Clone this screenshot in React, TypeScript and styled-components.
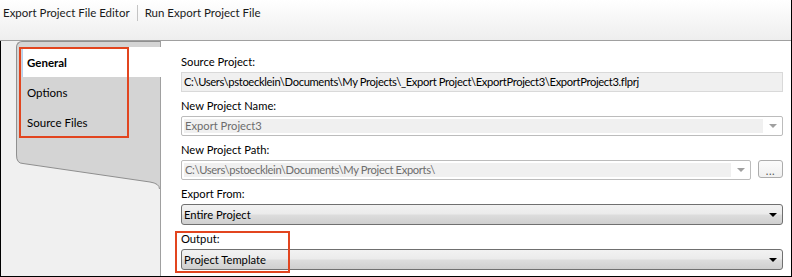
import React from "react";
import styled, { createGlobalStyle } from "styled-components";

const Global = createGlobalStyle`
  html, body { margin: 0; padding: 0; background: #ffffff; }
  body {
    font-family: Lato, "Open Sans", "Noto Sans", sans-serif;
    font-size: 11px;
    color: #000;
  }
  * { box-sizing: border-box; }
`;

const Frame = styled.div`
  width: 792px;
  height: 277px;
  border-right: 1px solid #000;
  border-bottom: 1px solid #000;
  display: flex;
  flex-direction: column;
  overflow: hidden;
`;

const Toolbar = styled.div`
  height: 41px;
  flex: none;
  border-bottom: 1px solid #a0a0a0;
  background: linear-gradient(#ffffff, #f8f8f8 40%, #eeeeee);
  display: flex;
  align-items: flex-start;
  padding: 4px 0 0 3px;
`;

const ToolItem = styled.span`
  font-size: 11.5px;
  line-height: 17px;
  color: #1a1a1a;
  padding-right: 7px;
`;

const ToolSep = styled.span`
  width: 1px;
  height: 16px;
  background: #c4c4c4;
  margin: 1px 7px 0 0;
`;

const Body = styled.div`
  flex: 1;
  display: flex;
  border-left: 1px solid #000;
  min-height: 0;
`;

const Sidebar = styled.div`
  width: 159px;
  flex: none;
  background: #f0f0f0;
  padding-left: 15px;
  display: flex;
  flex-direction: column;
  position: relative;
  z-index: 1;
`;

const TabStrip = styled.div`
  position: relative;
  height: 112px;
  background: #d4d4d4;
  border-left: 1px solid #8f8f8f;
  border-top: 1px solid #8f8f8f;
  border-top-left-radius: 6px;
  padding-top: 5px;
  padding-left: 5px;
`;

const Tab = styled.div<{ $active?: boolean }>`
  height: 30px;
  margin-right: -1px;
  display: flex;
  align-items: center;
  padding-left: 4px;
  font-size: 11.5px;
  font-weight: ${(p) => (p.$active ? 700 : 400)};
  background: ${(p) => (p.$active ? "#ffffff" : "transparent")};
  border-left: 1px solid ${(p) => (p.$active ? "#b3d0f0" : "transparent")};
`;

const TailSvg = styled.svg`
  display: block;
  width: 144px;
  height: 36px;
  flex: none;
`;

const Highlight = styled.div`
  position: absolute;
  border: 2px solid #e2451f;
  pointer-events: none;
`;

const TabHighlight = styled(Highlight)`
  left: 2px;
  top: 5px;
  width: 110px;
  height: 91px;
`;

const OutputHighlight = styled(Highlight)`
  left: -6px;
  top: 0;
  width: 115px;
  height: 42px;
`;

const Content = styled.div`
  flex: 1;
  background: #ffffff;
  border-left: 1px solid #a0a0a0;
  padding: 13px 8px 0 20px;
  display: flex;
  flex-direction: column;
  gap: 6px;
`;

const Group = styled.div`
  position: relative;
  display: flex;
  flex-direction: column;
`;

const Label = styled.div`
  height: 16px;
  line-height: 16px;
  margin-bottom: 2px;
  font-size: 11.2px;
`;

const ReadField = styled.div`
  height: 20px;
  border: 1px solid #d9d9d9;
  background: #f0f0f0;
  padding-left: 2px;
  line-height: 18px;
  font-size: 11.2px;
  letter-spacing: -0.35px;
  white-space: nowrap;
  overflow: hidden;
`;

const Row = styled.div`
  display: flex;
  align-items: flex-start;
  gap: 7px;
`;

const DisabledCombo = styled.div`
  flex: 1;
  height: 20px;
  border: 1px solid #bcbcbc;
  border-radius: 2px;
  background: #ffffff;
  padding: 2px 0 2px 2px;
  display: flex;
`;

const DisabledValue = styled.div<{ $tight?: boolean }>`
  flex: 1;
  background: #f0f0f0;
  color: #6d6d6d;
  line-height: 14px;
  padding-left: 1px;
  font-size: 11.2px;
  letter-spacing: ${(p) => (p.$tight ? "-0.35px" : "0")};
  white-space: nowrap;
`;

const ArrowBox = styled.div`
  width: 19px;
  display: flex;
  align-items: center;
  justify-content: center;
`;

const Arrow = styled.span<{ $color: string }>`
  width: 0;
  height: 0;
  border-left: 4px solid transparent;
  border-right: 4px solid transparent;
  border-top: 4px solid ${(p) => p.$color};
`;

const BrowseButton = styled.div`
  width: 25px;
  height: 18px;
  border: 1px solid #acacac;
  border-radius: 3px;
  background: linear-gradient(#fbfbfb, #f0f0f0);
  display: flex;
  align-items: flex-end;
  justify-content: center;
  font-size: 11px;
  line-height: 13px;
  color: #555;
  letter-spacing: 0.5px;
`;

const Dropdown = styled.div`
  height: 21px;
  border: 1px solid #707070;
  border-radius: 3px;
  background: linear-gradient(#f2f2f2 0%, #ebebeb 48%, #dddddd 52%, #cfcfcf 100%);
  display: flex;
  align-items: center;
  padding-left: 2px;
`;

const DropValue = styled.div`
  flex: 1;
  font-size: 11.2px;
  line-height: 19px;
`;

export default function App() {
  return (
    <>
      <Global />
      <Frame>
        <Toolbar>
          <ToolItem>Export Project File Editor</ToolItem>
          <ToolSep />
          <ToolItem>Run Export Project File</ToolItem>
        </Toolbar>
        <Body>
          <Sidebar>
            <TabStrip>
              <Tab $active>General</Tab>
              <Tab>Options</Tab>
              <Tab>Source Files</Tab>
              <TabHighlight />
            </TabStrip>
            <TailSvg viewBox="0 0 144 36">
              <path
                d="M0 0 V2 Q0 10.5 7 10.5 L134 29 Q143.5 30.5 143.5 36 H144 V0 Z"
                fill="#d4d4d4"
              />
              <path
                d="M0.5 0 V2 Q0.5 10.5 7 10.5 L134 29 Q143.5 30.5 143.5 36"
                fill="none"
                stroke="#8f8f8f"
                strokeWidth="1"
              />
            </TailSvg>
          </Sidebar>
          <Content>
            <Group>
              <Label>Source Project:</Label>
              <ReadField>
                C:\Users\pstoecklein\Documents\My Projects\_Export Project\ExportProject3\ExportProject3.flprj
              </ReadField>
            </Group>
            <Group>
              <Label>New Project Name:</Label>
              <DisabledCombo>
                <DisabledValue>Export Project3</DisabledValue>
                <ArrowBox>
                  <Arrow $color="#a0a0a0" />
                </ArrowBox>
              </DisabledCombo>
            </Group>
            <Group>
              <Label>New Project Path:</Label>
              <Row>
                <DisabledCombo>
                  <DisabledValue $tight>C:\Users\pstoecklein\Documents\My Project Exports\</DisabledValue>
                  <ArrowBox>
                    <Arrow $color="#a0a0a0" />
                  </ArrowBox>
                </DisabledCombo>
                <BrowseButton>...</BrowseButton>
              </Row>
            </Group>
            <Group>
              <Label>Export From:</Label>
              <Dropdown>
                <DropValue>Entire Project</DropValue>
                <ArrowBox>
                  <Arrow $color="#000" />
                </ArrowBox>
              </Dropdown>
            </Group>
            <Group>
              <Label>Output:</Label>
              <Dropdown>
                <DropValue>Project Template</DropValue>
                <ArrowBox>
                  <Arrow $color="#000" />
                </ArrowBox>
              </Dropdown>
              <OutputHighlight />
            </Group>
          </Content>
        </Body>
      </Frame>
    </>
  );
}
